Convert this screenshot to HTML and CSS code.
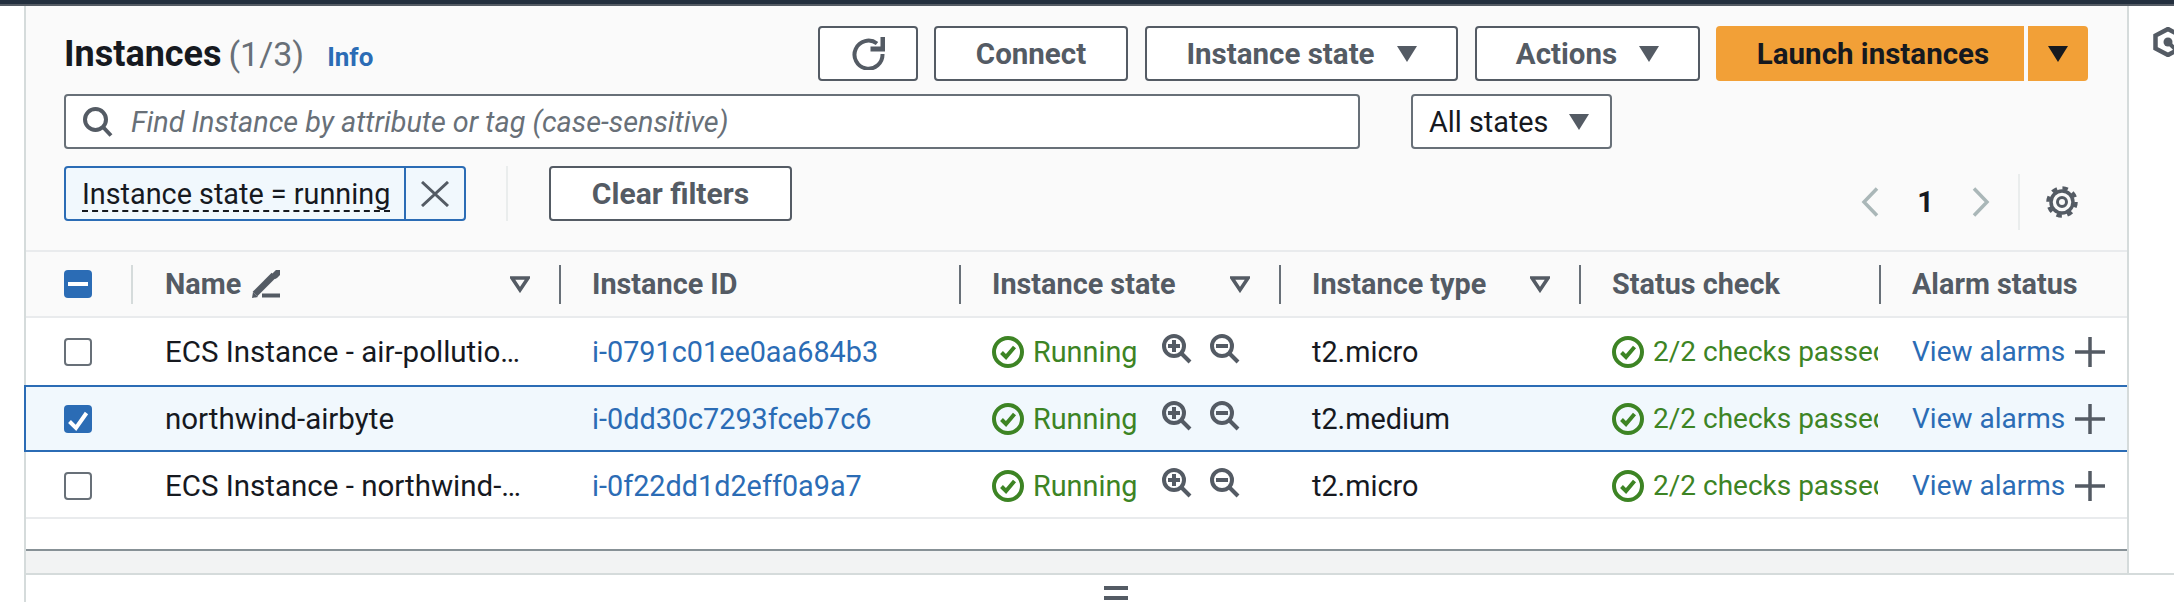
FILE: index.html
```html
<!DOCTYPE html>
<html lang="en">

<head>
    <meta charset="UTF-8">
    <meta name="viewport" content="width=device-width, initial-scale=1.0">
    <title>Instances</title>
    <link rel="stylesheet" href="styles.css">
</head>

<body>
    <svg class="icon-defs" width="0" height="0">
        <symbol id="status-ok" viewBox="0 0 32 32">
            <circle cx="16" cy="16" r="14" fill="none" stroke="currentColor" stroke-width="4"/>
            <path d="M9.5 16.5l4.5 4.5 8.5-10" fill="none" stroke="currentColor" stroke-width="4"/>
        </symbol>
        <symbol id="zoom-in" viewBox="0 0 30 30">
            <circle cx="12" cy="12" r="10" fill="none" stroke="currentColor" stroke-width="4"/>
            <path d="M19.5 19.5l8.5 8.5" fill="none" stroke="currentColor" stroke-width="4"/>
            <path d="M6 12h12M12 6v12" fill="none" stroke="currentColor" stroke-width="4"/>
        </symbol>
        <symbol id="zoom-out" viewBox="0 0 30 30">
            <circle cx="12" cy="12" r="10" fill="none" stroke="currentColor" stroke-width="4"/>
            <path d="M19.5 19.5l8.5 8.5" fill="none" stroke="currentColor" stroke-width="4"/>
            <path d="M6 12h12" fill="none" stroke="currentColor" stroke-width="4"/>
        </symbol>
        <symbol id="plus" viewBox="0 0 30 30">
            <path d="M0 15h30M15 0v30" fill="none" stroke="currentColor" stroke-width="3.5"/>
        </symbol>
        <symbol id="caret" viewBox="0 0 20 16">
            <path d="M0 0h20L10 16z" fill="currentColor"/>
        </symbol>
        <symbol id="sort" viewBox="0 0 20 17">
            <path d="M2 2h16l-8 12z" fill="none" stroke="currentColor" stroke-width="3.5"/>
        </symbol>
    </svg>

    <div class="top-bar"></div>

    <div class="workspace">
        <div class="workspace-top">
            <div class="panel">

                <div class="toolbar">
                    <div class="toolbar-row">
                        <h1 class="title">Instances <span class="title-count">(1/3)</span> <a class="info-link">Info</a></h1>
                        <button class="btn btn-refresh" aria-label="Refresh">
                            <svg width="33" height="33" viewBox="0 0 33 33">
                                <path d="M25 6.500A14 14 0 1 0 30.500 17" fill="none" stroke="currentColor" stroke-width="4"/>
                                <path d="M31 0v12H18.500" fill="none" stroke="currentColor" stroke-width="5"/>
                            </svg>
                        </button>
                        <button class="btn btn-connect">Connect</button>
                        <button class="btn btn-state">Instance state <svg class="caret"><use href="#caret"/></svg></button>
                        <button class="btn btn-actions">Actions <svg class="caret"><use href="#caret"/></svg></button>
                        <div class="launch">
                            <button class="launch-main">Launch instances</button>
                            <button class="launch-more" aria-label="More"><svg class="caret"><use href="#caret"/></svg></button>
                        </div>
                    </div>

                    <div class="toolbar-row search-row">
                        <div class="search-box">
                            <svg width="30" height="30" viewBox="0 0 30 30">
                                <circle cx="12.500" cy="12.500" r="10.500" fill="none" stroke="currentColor" stroke-width="4"/>
                                <path d="M20 20l8 8.500" fill="none" stroke="currentColor" stroke-width="4"/>
                            </svg>
                            <span class="search-hint">Find Instance by attribute or tag (case-sensitive)</span>
                        </div>
                        <div class="state-select">All states <svg class="caret"><use href="#caret"/></svg></div>
                    </div>

                    <div class="toolbar-row filter-row">
                        <div class="chip">
                            <span class="chip-label"><span class="chip-text">Instance state = running</span></span>
                            <span class="chip-close">
                                <svg width="28" height="26" viewBox="0 0 28 26">
                                    <path d="M1 1l26 24M27 1L1 25" fill="none" stroke="currentColor" stroke-width="3"/>
                                </svg>
                            </span>
                        </div>
                        <div class="filter-divider"></div>
                        <button class="btn btn-clear">Clear filters</button>

                        <div class="pager">
                            <svg class="pager-arrow" width="18" height="30" viewBox="0 0 18 30">
                                <path d="M16 1.500L3 15l13 13.500" fill="none" stroke="currentColor" stroke-width="3.500"/>
                            </svg>
                            <span class="pager-num">1</span>
                            <svg class="pager-arrow" width="18" height="30" viewBox="0 0 18 30">
                                <path d="M2 1.500L15 15 2 28.500" fill="none" stroke="currentColor" stroke-width="3.500"/>
                            </svg>
                            <div class="pager-divider"></div>
                            <svg class="gear" width="32" height="32" viewBox="0 0 32 32">
                                <circle cx="16" cy="16" r="11" fill="none" stroke="currentColor" stroke-width="3.500"/>
                                <circle cx="16" cy="16" r="14" fill="none" stroke="currentColor" stroke-width="3.500" stroke-dasharray="5.500 5.500"/>
                                <circle cx="16" cy="16" r="4.500" fill="none" stroke="currentColor" stroke-width="3"/>
                            </svg>
                        </div>
                    </div>
                </div>

                <div class="grid head">
                    <div class="head-check"><span class="checkbox checkbox-on"><span class="dash"></span></span></div>
                    <div class="th th-first">
                        <span class="th-label">Name
                            <svg width="28" height="28" viewBox="0 0 28 28">
                                <path d="M3 24L22 5" fill="none" stroke="currentColor" stroke-width="6.500"/>
                                <path d="M23 5.500l3-3" fill="none" stroke="currentColor" stroke-width="6.500" stroke-linecap="round"/>
                                <path d="M0 28l1-6 5 5z" fill="currentColor"/>
                                <path d="M10 25.500h18" fill="none" stroke="currentColor" stroke-width="4"/>
                            </svg>
                        </span>
                        <svg class="sort"><use href="#sort"/></svg>
                    </div>
                    <div class="th"><span class="th-label">Instance ID</span></div>
                    <div class="th"><span class="th-label">Instance state</span><svg class="sort"><use href="#sort"/></svg></div>
                    <div class="th"><span class="th-label">Instance type</span><svg class="sort"><use href="#sort"/></svg></div>
                    <div class="th"><span class="th-label">Status check</span></div>
                    <div class="th"><span class="th-label">Alarm status</span></div>
                </div>

                <div class="grid row">
                    <div class="cell-check"><span class="checkbox"></span></div>
                    <div class="cell cell-name">ECS Instance - air-pollutio…</div>
                    <div class="cell"><a class="link">i-0791c01ee0aa684b3</a></div>
                    <div class="cell cell-state">
                        <svg class="ok"><use href="#status-ok"/></svg><span class="ok-text">Running</span>
                        <svg class="mag mag-in"><use href="#zoom-in"/></svg><svg class="mag"><use href="#zoom-out"/></svg>
                    </div>
                    <div class="cell">t2.micro</div>
                    <div class="cell cell-status"><svg class="ok"><use href="#status-ok"/></svg><span class="ok-text status-text">2/2 checks passed</span></div>
                    <div class="cell cell-alarm"><a class="link">View alarms</a><svg class="plus"><use href="#plus"/></svg></div>
                </div>

                <div class="grid row row-selected">
                    <div class="cell-check"><span class="checkbox checkbox-on">
                        <svg width="28" height="28" viewBox="0 0 28 28"><path d="M5.500 16.500l6.500 6.500L22.500 8" fill="none" stroke="#fff" stroke-width="4"/></svg>
                    </span></div>
                    <div class="cell cell-name">northwind-airbyte</div>
                    <div class="cell"><a class="link">i-0dd30c7293fceb7c6</a></div>
                    <div class="cell cell-state">
                        <svg class="ok"><use href="#status-ok"/></svg><span class="ok-text">Running</span>
                        <svg class="mag mag-in"><use href="#zoom-in"/></svg><svg class="mag"><use href="#zoom-out"/></svg>
                    </div>
                    <div class="cell">t2.medium</div>
                    <div class="cell cell-status"><svg class="ok"><use href="#status-ok"/></svg><span class="ok-text status-text">2/2 checks passed</span></div>
                    <div class="cell cell-alarm"><a class="link">View alarms</a><svg class="plus"><use href="#plus"/></svg></div>
                </div>

                <div class="grid row row-last">
                    <div class="cell-check"><span class="checkbox"></span></div>
                    <div class="cell cell-name">ECS Instance - northwind-…</div>
                    <div class="cell"><a class="link">i-0f22dd1d2eff0a9a7</a></div>
                    <div class="cell cell-state">
                        <svg class="ok"><use href="#status-ok"/></svg><span class="ok-text">Running</span>
                        <svg class="mag mag-in"><use href="#zoom-in"/></svg><svg class="mag"><use href="#zoom-out"/></svg>
                    </div>
                    <div class="cell">t2.micro</div>
                    <div class="cell cell-status"><svg class="ok"><use href="#status-ok"/></svg><span class="ok-text status-text">2/2 checks passed</span></div>
                    <div class="cell cell-alarm"><a class="link">View alarms</a><svg class="plus"><use href="#plus"/></svg></div>
                </div>

                <div class="table-space"></div>
                <div class="scroll-track"></div>
            </div>

            <div class="side">
                <svg width="21" height="30" viewBox="0 0 21 30">
                    <path d="M15 2L2.500 8.500v13L15 28l12-6.500v-13z" fill="none" stroke="currentColor" stroke-width="4.500"/>
                    <circle cx="15" cy="15" r="4.500" fill="currentColor"/>
                    <path d="M17 17l6 6" fill="none" stroke="currentColor" stroke-width="4"/>
                </svg>
            </div>
        </div>

        <div class="drawer">
            <div class="drawer-handle"></div>
        </div>
    </div>
</body>

</html>
```

FILE: styles.css
```css
* {
    box-sizing: border-box;
}

body {
    font-family: 'Roboto', 'Liberation Sans', sans-serif;
    font-size: 28.800px;
    color: #16191f;
    background-color: #fff;
    margin: 0;
    height: 602px;
    overflow: hidden;
}

.icon-defs {
    position: absolute;
}

svg {
    display: block;
    flex: none;
}

button {
    font-family: inherit;
    font-size: 29.500px;
    padding: 0;
}

.top-bar {
    height: 6px;
    background-color: #232f3e;
    border-bottom: 2px solid #545b64;
}

.workspace {
    margin-left: 24px;
}

.workspace-top {
    display: flex;
}

.panel {
    width: 2105px;
    background-color: #fafafa;
    border-left: 2px solid #d5dbdb;
    border-right: 2px solid #d5dbdb;
}

.side {
    padding: 21px 0 0 24px;
    color: #545b64;
}

/* toolbar */
.toolbar {
    padding: 20px 39px 29px 38px;
    border-bottom: 2px solid #e9ebed;
}

.toolbar-row {
    display: flex;
    align-items: center;
}

.search-row {
    margin-top: 13px;
}

.filter-row {
    margin-top: 17px;
}

.title {
    flex: 1;
    margin: 0;
    font-size: 36px;
    font-weight: 700;
    white-space: nowrap;
}

.title-count {
    margin-left: -2px;
    font-weight: 400;
    font-size: 34px;
    color: #687078;
}

.info-link {
    margin-left: 14px;
    font-size: 26px;
    color: #2b6cb5;
}

.btn {
    display: flex;
    align-items: center;
    justify-content: center;
    height: 55px;
    background-color: #fff;
    border: 2px solid #545b64;
    border-radius: 4px;
    color: #545b64;
    font-weight: 700;
}

.btn-refresh {
    width: 100px;
}

.btn-connect {
    width: 194px;
    margin-left: 16px;
}

.btn-state {
    width: 313px;
    margin-left: 17px;
    gap: 22px;
}

.btn-actions {
    width: 225px;
    margin-left: 17px;
    gap: 22px;
}

.caret {
    width: 20px;
    height: 16px;
}

.launch {
    display: flex;
    margin-left: 16px;
    height: 55px;
}

.launch-main,
.launch-more {
    display: flex;
    align-items: center;
    justify-content: center;
    border: none;
    background-color: #f2a037;
    color: #16191f;
    font-weight: 700;
}

.launch-main {
    width: 308px;
    padding-left: 6px;
    border-radius: 4px 0 0 4px;
}

.launch-more {
    width: 60px;
    margin-left: 4px;
    border-radius: 0 4px 4px 0;
}

.search-box {
    display: flex;
    align-items: center;
    width: 1296px;
    height: 55px;
    padding-left: 17px;
    background-color: #fff;
    border: 2px solid #687078;
    border-radius: 4px;
    color: #545b64;
}

.search-hint {
    margin-left: 18px;
    font-style: italic;
    color: #687078;
}

.state-select {
    display: flex;
    align-items: center;
    gap: 21px;
    width: 201px;
    height: 55px;
    margin-left: 51px;
    padding-left: 16px;
    background-color: #fff;
    border: 2px solid #687078;
    border-radius: 4px;
}

.state-select .caret {
    color: #545b64;
}

.chip {
    display: flex;
    width: 402px;
    height: 55px;
    background-color: #f1f8fd;
    border: 2px solid #2b6cb5;
    border-radius: 4px;
}

.chip-label {
    display: flex;
    align-items: center;
    width: 340px;
    padding-left: 16px;
    border-right: 2px solid #2b6cb5;
}

.chip-text {
    margin-top: 2px;
    line-height: 32px;
    border-bottom: 2px dashed #16191f;
    white-space: nowrap;
}

.chip-close {
    flex: 1;
    display: flex;
    align-items: center;
    justify-content: center;
    color: #545b64;
}

.filter-divider {
    width: 2px;
    height: 55px;
    margin-left: 40px;
    background-color: #eaeded;
}

.btn-clear {
    width: 243px;
    margin-left: 41px;
    font-size: 30px;
}

.pager {
    display: flex;
    align-items: center;
    align-self: flex-start;
    margin: 8px 0 -9px auto;
}

.pager-arrow {
    color: #aab7b8;
}

.pager-num {
    width: 93px;
    text-align: center;
    font-weight: 700;
}

.pager-divider {
    width: 2px;
    height: 56px;
    margin: 0 26px 0 28px;
    background-color: #eaeded;
}

.gear {
    margin-right: 10px;
    color: #545b64;
}

/* table */
.grid {
    display: grid;
    grid-template-columns: 105px 428px 400px 320px 300px 300px 248px;
    align-items: center;
}

.head {
    height: 66px;
    border-bottom: 2px solid #e9ebed;
    color: #545b64;
    font-weight: 700;
}

.head-check,
.cell-check {
    padding-left: 38px;
}

.th {
    display: flex;
    align-items: center;
    justify-content: space-between;
    height: 39px;
    padding: 0 29px 0 31px;
    border-left: 2px solid #687078;
}

.th-first {
    border-left-color: #d5dbdb;
    padding-left: 32px;
}

.th-label {
    display: flex;
    align-items: center;
    gap: 11px;
    white-space: nowrap;
}

.sort {
    width: 20px;
    height: 17px;
}

.checkbox {
    display: block;
    width: 28px;
    height: 28px;
    background-color: #fff;
    border: 2px solid #687078;
    border-radius: 4px;
}

.checkbox-on {
    display: flex;
    align-items: center;
    justify-content: center;
    background-color: #2b6cb5;
    border: none;
}

.dash {
    width: 20px;
    height: 4px;
    background-color: #fff;
}

.row {
    height: 67px;
    background-color: #fff;
}

.row-selected {
    margin-left: -2px;
    border: solid #2b6cb5;
    border-width: 2px 0 2px 2px;
    background-color: #f1f8fd;
}

.row-last {
    box-shadow: inset 0 -2px #e9ebed;
}

.cell {
    display: flex;
    align-items: center;
    padding-left: 33px;
    white-space: nowrap;
    overflow: hidden;
}

.row .cell-name {
    padding-left: 34px;
    font-size: 29.500px;
}

.link {
    color: #2b6cb5;
}

.ok {
    width: 32px;
    height: 32px;
    color: #3d8424;
}

.ok-text {
    margin-left: 9px;
    color: #3d8424;
}

.mag {
    width: 30px;
    height: 30px;
    margin-left: 18px;
    margin-bottom: 6px;
    color: #545b64;
}

.mag-in {
    margin-left: 24px;
}

.cell-status {
    padding-right: 1px;
}

.status-text {
    min-width: 0;
    overflow: hidden;
    font-size: 28px;
}

.cell-alarm .link {
    font-size: 28px;
}

.plus {
    width: 30px;
    height: 30px;
    margin-left: 10px;
    color: #545b64;
}

.table-space {
    height: 32px;
    background-color: #fff;
    border-bottom: 2px solid #879196;
}

.scroll-track {
    height: 22px;
    background-color: #f2f3f3;
}

/* bottom drawer */
.drawer {
    height: 29px;
    padding: 11px 0 0 1078px;
    border-left: 2px solid #d5dbdb;
    border-top: 2px solid #d5dbdb;
}

.drawer-handle {
    width: 24px;
    height: 14px;
    border-top: 4px solid #545b64;
    border-bottom: 4px solid #545b64;
}
```
